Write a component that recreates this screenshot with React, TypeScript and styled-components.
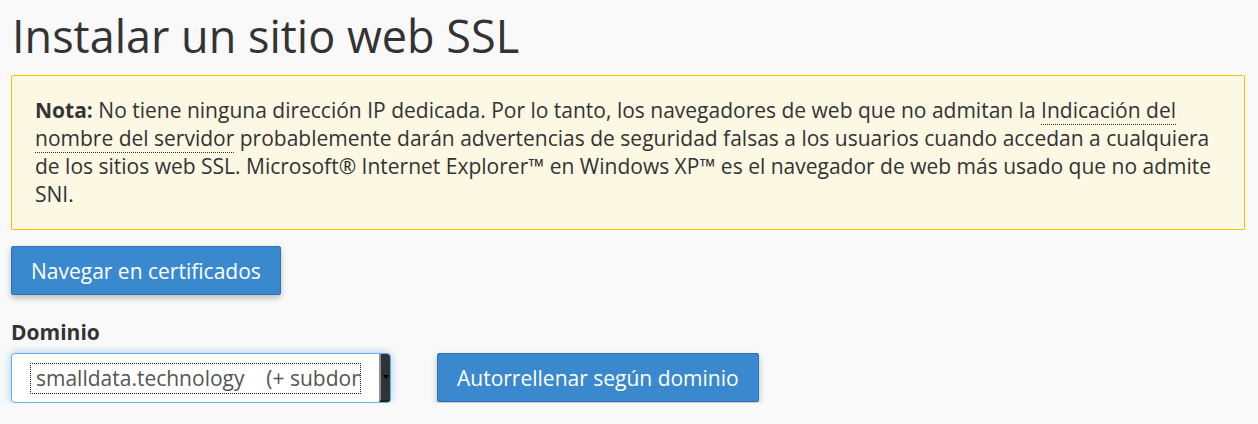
import React from "react";
import styled, { createGlobalStyle } from "styled-components";

const GlobalStyle = createGlobalStyle`
  body {
    margin: 0;
    background: #f9f9f9;
    font-family: "Open Sans", "Liberation Sans", sans-serif;
    color: #333;
  }
`;

const App = () => {
  return (
    <Page>
      <GlobalStyle />
      <Title>Instalar un sitio web SSL</Title>
      <Alert>
        <strong>Nota:</strong> No tiene ninguna dirección IP dedicada. Por lo
        tanto, los navegadores de web que no admitan la{" "}
        <Abbr title="Server Name Indication">Indicación del nombre del servidor</Abbr>{" "}
        probablemente darán advertencias de seguridad falsas a los usuarios
        cuando accedan a cualquiera de los sitios web SSL. Microsoft® Internet
        Explorer™ en Windows XP™ es el navegador de web más usado que no admite
        SNI.
      </Alert>
      <Button>Navegar en certificados</Button>
      <Label>Dominio</Label>
      <DomainRow>
        <SelectBox>
          <SelectValue>smalldata.technology&nbsp;&nbsp;&nbsp;&nbsp;(+ subdominios)</SelectValue>
          <ArrowBar>
            <Caret />
          </ArrowBar>
        </SelectBox>
        <Button>Autorrellenar según dominio</Button>
      </DomainRow>
    </Page>
  );
};

export default App;

const Page = styled.div`
  padding: 0 13px 0 11px;
  display: flex;
  flex-direction: column;
  align-items: flex-start;
`;

const Title = styled.h1`
  margin: 4px 0 0 1px;
  font-size: 45px;
  font-weight: 400;
  line-height: 64px;
  color: #333;
`;

const Alert = styled.div`
  box-sizing: border-box;
  align-self: stretch;
  margin-top: 7px;
  padding: 20px 23px 21px;
  background: #fcf8e3;
  border: 1px solid #f3c300;
  border-radius: 2px;
  font-size: 21px;
  line-height: 28px;

  strong {
    font-weight: 700;
  }
`;

const Abbr = styled.abbr`
  text-decoration: none;
  border-bottom: 1px dotted #333;
  cursor: help;
`;

const Button = styled.button`
  box-sizing: border-box;
  height: 49px;
  margin-top: 16px;
  padding: 0 19px;
  background: #3a89cf;
  border: 1px solid #2d72b2;
  border-radius: 2px;
  box-shadow: 0 3px 6px rgba(0, 0, 0, 0.25);
  color: #fff;
  font-family: "Open Sans", "Liberation Sans", sans-serif;
  font-size: 21px;
  cursor: pointer;
`;

const Label = styled.label`
  margin-top: 24px;
  font-size: 21px;
  font-weight: 700;
  line-height: 26px;
  color: #333;
`;

const DomainRow = styled.div`
  display: flex;
  align-items: flex-start;
  gap: 46px;
  margin-top: 8px;

  ${Button} {
    margin-top: 0;
    height: 49px;
  }
`;

const SelectBox = styled.div`
  box-sizing: border-box;
  width: 380px;
  height: 50px;
  display: flex;
  align-items: center;
  background: #fff;
  border: 1px solid #66afe9;
  border-radius: 4px;
  box-shadow: 0 0 8px rgba(102, 175, 233, 0.6);
  overflow: hidden;
`;

const SelectValue = styled.span`
  flex: 1;
  min-width: 0;
  margin: 0 19px 0 19px;
  padding: 0 0 0 5px;
  height: 29px;
  line-height: 28px;
  outline: 1px dotted #222;
  white-space: nowrap;
  overflow: hidden;
  font-size: 21px;
  color: #555;
`;

const ArrowBar = styled.span`
  align-self: stretch;
  width: 9px;
  display: flex;
  align-items: center;
  justify-content: center;
  background: #2e3336;
  border-left: 2px solid #8b8e90;
  border-bottom: 2px solid #1f2224;
`;

const Caret = styled.span`
  width: 0;
  height: 0;
  border-left: 3px solid transparent;
  border-right: 3px solid transparent;
  border-top: 4px solid #000;
`;
